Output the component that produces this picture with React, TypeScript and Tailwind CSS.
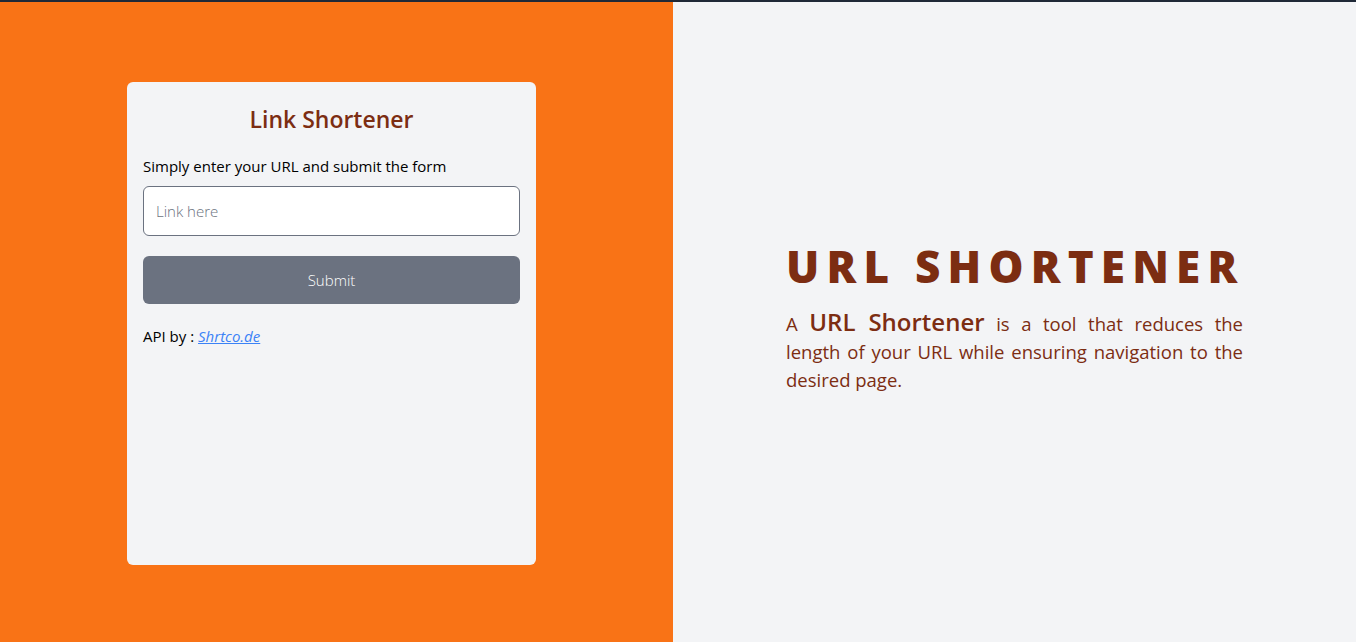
export default function App() {
  return (
    <div className="h-[642px] w-full flex border-t-2 border-[#1f2937] font-['Open_Sans',sans-serif] overflow-hidden">
      {/* Left: form */}
      <div className="w-[673px] bg-[#f97316] flex items-center justify-center pr-[10px] pt-[2px]">
        <div className="w-[409px] h-[483px] bg-[#f3f4f6] rounded-md px-4 pt-[26px]">
          <h2 className="text-center text-[23px] font-semibold text-[#7c2d12] leading-none mb-[24px]">Link Shortener</h2>
          <p className="text-[15px] text-black mb-[9px]">Simply enter your URL and submit the form</p>
          <input
            type="text"
            placeholder="Link here"
            className="w-full h-[50px] rounded-md border border-[#6b7280] bg-white px-3 text-[15px] font-light placeholder:text-[#6b7280] outline-none"
          />
          <button className="w-full h-[48px] mt-5 rounded-md bg-[#6b7280] text-white text-[15px] font-light">Submit</button>
          <p className="mt-[21px] text-[15px] text-black">
            API by :{" "}
            <a href="#" className="italic underline text-[#3b82f6]">Shrtco.de</a>
          </p>
        </div>
      </div>

      {/* Right: description */}
      <div className="flex-1 bg-[#f3f4f6] flex items-center justify-center">
        <div className="w-[457px] pb-[7px]">
          <h1 className="text-[44px] font-extrabold text-[#7c2d12] tracking-[7.2px] leading-none whitespace-nowrap mb-[22px]">URL SHORTENER</h1>
          <p className="text-[18.5px] text-[#7c2d12] leading-[28px] text-justify">
            A <span className="font-semibold text-[24px] leading-none">URL Shortener</span> is a tool that reduces the length{"\u00A0"}of your URL while ensuring navigation to the desired page.
          </p>
        </div>
      </div>
    </div>
  );
}
